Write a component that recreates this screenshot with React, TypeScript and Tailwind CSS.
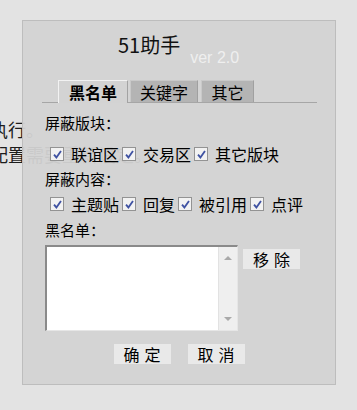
import { ReactNode } from 'react';

const cjk = "font-['Noto_Sans_CJK_SC',sans-serif]";

function Check({ label }: { label: string }) {
  return (
    <label className="flex items-center gap-x-[7px] mr-[3px]">
      <span className="w-[14px] h-[14px] border border-[#939393] bg-[#f2f2f2] flex items-center justify-center">
        <svg viewBox="0 0 12 12" className="w-[11px] h-[11px]">
          <path d="M2.2 6.2 L4.8 9.2 L9.8 2.2" fill="none" stroke="#3f52a2" strokeWidth="2" />
        </svg>
      </span>
      <span className="text-[16px] leading-[20px] text-black">{label}</span>
    </label>
  );
}

function Btn({ children, className }: { children: ReactNode; className?: string }) {
  const chars = String(children).split('');
  return (
    <button
      className={`h-[20px] w-[57px] bg-[#e9e9e9] flex items-center justify-center gap-x-[5px] text-[16px] leading-[20px] text-black ${className ?? ''}`}>
      {chars.map((c) => (
        <span key={c}>{c}</span>
      ))}
    </button>
  );
}

function Tab({ label, active, w }: { label: string; active?: boolean; w: string }) {
  return active ? (
    <div
      className={`${w} h-[23px] -mb-px bg-[#d3d3d3] border-t border-l border-[#f2f2f2] border-r border-r-[#a3a3a3] flex items-center justify-center font-bold text-[16px] text-black`}>
      {label}
    </div>
  ) : (
    <div
      className={`${w} h-[22px] bg-[#b4b4b4] border-t border-l border-r border-[#c9c9c9] border-r-[#a0a0a0] flex items-center justify-center text-[16px] text-black`}>
      {label}
    </div>
  );
}

export default function App() {
  return (
    <div className={`relative w-[357px] h-[410px] overflow-hidden bg-[#e3e3e3] ${cjk}`}>
      {/* page text under the dialog */}
      <div className="pt-[117px] text-[18px] leading-[25px] text-[#1c1c1c]">
        <p className="ml-[-10px]">执行。</p>
        <p className="ml-[-10px]">配置需要重新设定。</p>
      </div>

      <div className="absolute left-[22px] top-[20px] w-[314px] h-[365px] border border-[#bdbdbd] bg-[#d3d3d3]/95">
        <div className="h-[59px] flex items-start pt-[12px] pl-[95px]">
          <span className="text-[20px] leading-[24px] text-[#111]">51助手</span>
          <span className="ml-[10px] mt-[15px] text-[16px] leading-[20px] text-[#efefef] font-['Liberation_Sans',sans-serif]">
            ver 2.0
          </span>
        </div>

        <div className="ml-[19px] w-[275px] border-b border-[#a6a6a6] flex items-end pl-[16px] gap-x-[2px]">
          <Tab label="黑名单" active w="w-[70px]" />
          <Tab label="关键字" w="w-[68px]" />
          <Tab label="其它" w="w-[53px] ml-px" />
        </div>

        <div className="pl-[22px]">
          <div className="mt-[10px] text-[15px] leading-[20px] text-black">屏蔽版块：</div>
          <div className="mt-[11px] ml-[5px] flex items-center">
            <Check label="联谊区" />
            <Check label="交易区" />
            <Check label="其它版块" />
          </div>
          <div className="mt-[5px] text-[15px] leading-[20px] text-black">屏蔽内容：</div>
          <div className="mt-[5px] ml-[5px] flex items-center">
            <Check label="主题贴" />
            <Check label="回复" />
            <Check label="被引用" />
            <Check label="点评" />
          </div>
          <div className="mt-[6px] text-[15px] leading-[20px] text-black">黑名单：</div>

          <div className="mt-[5px] flex items-start gap-x-[5px]">
            <div className="w-[193px] h-[86px] flex border-t-2 border-l-2 border-[#8a8a8a] border-r border-b border-r-[#e6e6e6] border-b-[#e6e6e6] bg-white">
              <div className="flex-1 bg-white" />
              <div className="w-[19px] bg-[#efefef] border-l border-[#e2e2e2] flex flex-col items-center justify-between pt-[9px] pb-[9px]">
                <svg viewBox="0 0 8 4" className="w-[8px] h-[4px]">
                  <path d="M0 4 L4 0 L8 4 Z" fill="#a9a9a9" />
                </svg>
                <svg viewBox="0 0 8 4" className="w-[8px] h-[4px]">
                  <path d="M0 0 L8 0 L4 4 Z" fill="#a9a9a9" />
                </svg>
              </div>
            </div>
            <Btn className="mt-[4px]">移除</Btn>
          </div>
        </div>

        <div className="mt-[13px] flex justify-center gap-x-[17px]">
          <Btn>确定</Btn>
          <Btn>取消</Btn>
        </div>
      </div>
    </div>
  );
}
